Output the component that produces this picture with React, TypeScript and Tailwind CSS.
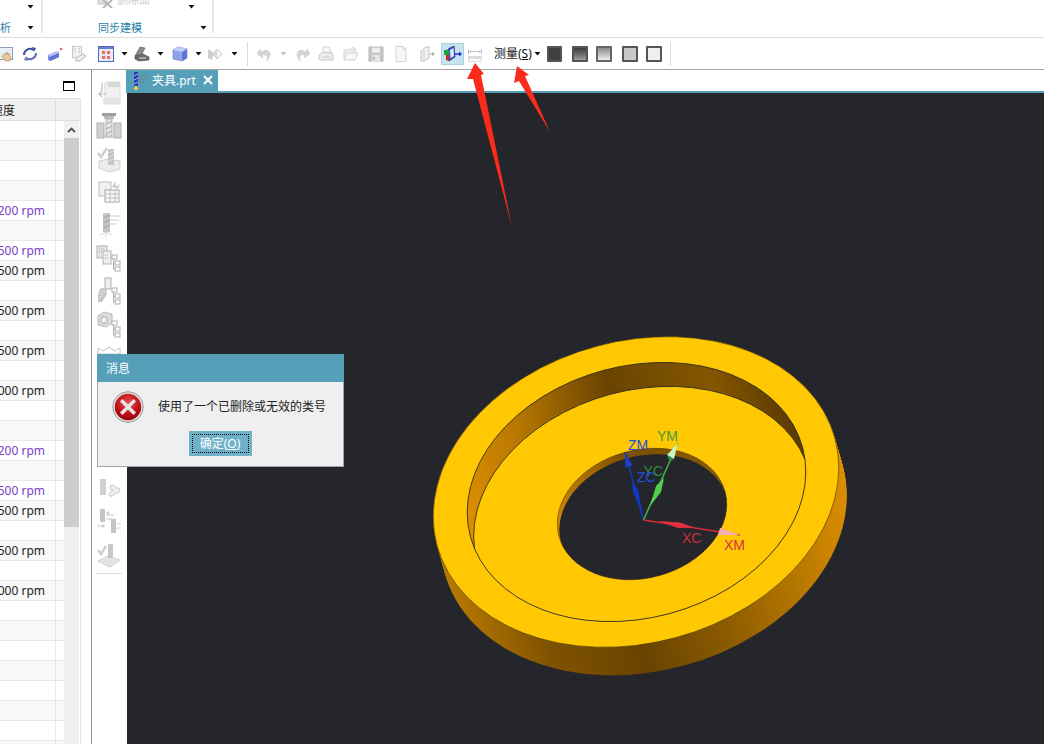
import React from "react";

const cjk = "[font-family:'Noto_Sans','Noto_Sans_CJK_SC',sans-serif]";

function Caret({ className = "", gray = false }: { className?: string; gray?: boolean }) {
  return (
    <svg width="7" height="4" viewBox="0 0 7 4" className={`block shrink-0 ${className}`}>
      <polygon points="0.5,0 6.5,0 3.5,3.5" fill={gray ? "#c4c4c4" : "#111"} />
    </svg>
  );
}

type IP = { className?: string };
const base = "block shrink-0 ";
const S = ({ className = "", children, w = 16, h = 16 }: IP & { children: React.ReactNode; w?: number; h?: number }) => (
  <svg width={w} height={h} viewBox={`0 0 ${w} ${h}`} className={base + className}>
    {children}
  </svg>
);

const Hand = (p: IP) => (
  <S {...p}>
    <rect x="0.5" y="1.5" width="15" height="12" fill="#e8eef8" stroke="#8f9fbe" />
    <path d="M5 10l3-3 1 2 1-3 1 3 1-2 1 3 1 1-1 4H8z" fill="#e8c89a" stroke="#b09060" strokeWidth=".6" />
  </S>
);
const Rotate = (p: IP) => (
  <S {...p}>
    <path d="M2 9a6 6 0 0 1 9.5-5" fill="none" stroke="#3c4f98" strokeWidth="2" />
    <path d="M14 7a6 6 0 0 1-9.5 5" fill="none" stroke="#5a6ab0" strokeWidth="2" />
    <polygon points="10,1 14,2 12,6" fill="#3c4f98" />
    <polygon points="6,15 2,14 4,10" fill="#6d7db8" />
  </S>
);
const CubeDot = (p: IP) => (
  <S {...p}>
    <polygon points="1,9 10,5 12,7 12,11 3,15 1,14" fill="#7f8fe0" />
    <polygon points="1,9 10,5 12,7 3,11" fill="#b4c0f4" />
    <polygon points="3,11 12,7 12,11 3,15" fill="#5f70d0" />
    <circle cx="14" cy="3" r="1.2" fill="#e85a5a" />
  </S>
);
const DocGray = (p: IP) => (
  <S {...p}>
    <rect x="1.5" y="0.5" width="9" height="11" fill="#f4f4f4" stroke="#c4c4c4" />
    <path d="M3 3h2M3 6h2M7 3h2M7 6h2" stroke="#bbb" />
    <polygon points="5,12 12,8 15,10 9,15 5,15" fill="#eee" stroke="#b8b8b8" />
  </S>
);
const Grid = (p: IP) => (
  <S {...p}>
    <rect x="0.5" y="0.5" width="15" height="15" fill="#e6e9f8" stroke="#5568b8" />
    <rect x="1" y="1" width="14" height="2" fill="#6a7cd0" />
    {[4, 9].map((x) =>
      [5, 10].map((y) => <rect key={`${x}${y}`} x={x} y={y} width="3" height="3" fill="#ee6a50" />)
    )}
  </S>
);
const Scanner = (p: IP) => (
  <S {...p}>
    <polygon points="1,10 6,1 11,2 7,10" fill="#8a8a8a" stroke="#555" strokeWidth=".6" />
    <polygon points="1,10 9,8 15,11 15,14 5,15 1,13" fill="#6c6c6c" stroke="#444" strokeWidth=".6" />
    <path d="M5 12h7" stroke="#ddd" />
  </S>
);
const CubeBlue = (p: IP) => (
  <S {...p}>
    <polygon points="1,4 6,1 15,3 15,12 10,15 1,13" fill="#8ea3e8" stroke="#6276c8" strokeWidth=".6" />
    <polygon points="1,4 6,1 15,3 10,6" fill="#c2cdf4" />
    <polygon points="10,6 15,3 15,12 10,15" fill="#5f78d2" />
  </S>
);
const Diamonds = (p: IP) => (
  <S {...p}>
    <polygon points="1,3 7,7 5,14 1,12" fill="#cfcfcf" />
    <polygon points="6,8 10,3 15,8 10,13" fill="#f4f4f4" stroke="#c8c8c8" />
    <polygon points="6,8 10,3 10,13" fill="#d8d8d8" />
  </S>
);
const Undo = (p: IP) => (
  <S {...p}>
    <path d="M4 6c4-3 10-2 9 4l-3 5c1-5 0-7-5-6l1 3-6-4 3-5z" fill="#d4d4d4" stroke="#c4c4c4" strokeWidth=".5" />
  </S>
);
const Redo = (p: IP) => (
  <S {...p}>
    <path d="M12 6C8 3 2 4 3 10l3 5c-1-5 0-7 5-6l-1 3 6-4-3-5z" fill="#d4d4d4" stroke="#c4c4c4" strokeWidth=".5" />
  </S>
);
const Printer = (p: IP) => (
  <S {...p}>
    <polygon points="5,1 11,1 13,7 5,7" fill="#f8f8f8" stroke="#cfcfcf" />
    <polygon points="1,9 5,6 14,7 15,9 15,14 2,14 1,13" fill="#ececec" stroke="#c8c8c8" />
    <path d="M4 11h8" stroke="#d0d0d0" />
  </S>
);
const OpenF = (p: IP) => (
  <S {...p}>
    <path d="M1 4h4l1-1h6v10H1z" fill="#ededed" stroke="#d4d4d4" />
    <polygon points="1,14 4,7 15,7 12,14" fill="#f6f6f6" stroke="#d4d4d4" />
    <path d="M9 1l3 1 1 3" stroke="#d8d8d8" fill="none" />
  </S>
);
const Save = (p: IP) => (
  <S {...p}>
    <rect x="1" y="1" width="14" height="14" fill="#c4c4c4" stroke="#b8b8b8" />
    <rect x="4" y="1.5" width="8" height="5" fill="#efefef" />
    <rect x="4" y="9" width="8" height="6" fill="#e6e6e6" />
    <rect x="5" y="10.5" width="2" height="3.5" fill="#b8b8b8" />
  </S>
);
const NewDoc = (p: IP) => (
  <S {...p}>
    <path d="M3 .5h7l3 3v12H3z" fill="#f8f8f8" stroke="#d4d4d4" />
    <path d="M10 .5v3h3" fill="none" stroke="#d4d4d4" />
  </S>
);
const Door = (p: IP) => (
  <S {...p}>
    <polygon points="2,5 7,1 10,1 10,12 5,15 2,15" fill="#f0f0f0" stroke="#c0c0c0" />
    <path d="M5 5v10" stroke="#cdcdcd" />
    <path d="M11 8h4" stroke="#a8a8a8" />
    <polygon points="13,6 16,8 13,10" fill="#a8a8a8" />
  </S>
);
const ActiveView = (p: IP) => (
  <S {...p} w={18} h={16}>
    <polygon points="4,3 10,0 11,11 5,15" fill="#3c58c8" stroke="#1a2a78" strokeWidth=".7" />
    <polygon points="6,4 9.5,2 10,10 6.5,12" fill="#dfe6ff" />
    <polygon points="0,4 5,4 5,9 0,9" fill="#16a83c" />
    <polygon points="2,9 5,9 5,15 2,14" fill="#d81e2a" />
    <path d="M11 8h5" stroke="#1a2fd0" strokeWidth="1.5" />
    <polygon points="15,5.5 18,8 15,10.5" fill="#1a2fd0" />
  </S>
);
const Ruler = (p: IP) => (
  <S {...p} w={14} h={13}>
    <path d="M.5 0v5M13.5 0v5M1 2.5h12" stroke="#c0c0c0" fill="none" />
    <path d="M3 1.5l-1.5 1 1.5 1M11 1.5l1.5 1-1.5 1" stroke="#c0c0c0" fill="none" />
    <rect x="0.5" y="7.5" width="13" height="5" fill="#fafafa" stroke="#dcdcdc" />
    <path d="M2 8v2M4 8v2M6 8v2M8 8v2M10 8v2M12 8v2" stroke="#c0c0c0" />
  </S>
);

/* left vertical strip icons */
const g1 = "#d8d8d8";
const g2 = "#bdbdbd";
const g3 = "#f0f0f0";
const V = ({ children }: { children: React.ReactNode }) => (
  <div className="h-[33px] flex items-center justify-center shrink-0">
    <svg width="26" height="28" viewBox="0 0 26 28" className="block">
      {children}
    </svg>
  </div>
);
const tree = (x: number, y: number) => (
  <g fill="#fff" stroke="#b0b0b0">
    <rect x={x} y={y} width="5" height="4" />
    <rect x={x + 3} y={y + 6} width="5" height="4" />
    <rect x={x + 3} y={y + 12} width="5" height="4" />
    <path d={`M${x + 1.5} ${y + 4}v10h2M${x + 1.5} ${y + 8}h2`} fill="none" />
  </g>
);
const strip = [
  <>
    <rect x="9" y="3" width="15" height="22" rx="1" fill={g3} stroke={g1} />
    <rect x="12" y="3" width="12" height="5" fill={g1} />
    <rect x="7" y="19" width="17" height="6" fill="#e4e4e4" />
    <path d="M6 4v9M10 15H3l3-3M3 15l3 3" fill="none" stroke={g2} strokeWidth="1.2" />
  </>,
  <>
    <rect x="6" y="1" width="14" height="3" fill="#9f9f9f" />
    <rect x="8" y="4" width="10" height="3" fill="#bcbcbc" />
    <rect x="1" y="11" width="7" height="15" fill="#d0d0d0" stroke="#b0b0b0" />
    <rect x="18" y="11" width="7" height="15" fill="#d0d0d0" stroke="#b0b0b0" />
    <rect x="8" y="23" width="10" height="3" fill="#d0d0d0" />
    <rect x="10" y="7" width="6" height="17" fill="#e4e4e4" stroke="#b8b8b8" />
    <path d="M10 12l6-3M10 17l6-3M10 22l6-3" stroke="#a8a8a8" />
  </>,
  <>
    <path d="M2 8l3 4 6-9" fill="none" stroke="#cfcfcf" strokeWidth="2.5" />
    <polygon points="3,16 12,14 24,16 24,24 13,27 3,23" fill="#ececec" stroke="#d0d0d0" />
    <rect x="12" y="4" width="6" height="16" fill="#c4c4c4" />
    <path d="M12 8l6-2M12 12l6-2M12 16l6-2" stroke="#dedede" />
  </>,
  <>
    <rect x="3" y="4" width="12" height="14" fill={g3} stroke="#c0c0c0" />
    <rect x="9" y="12" width="14" height="12" fill="#f8f8f8" stroke="#a8a8a8" />
    <path d="M9 16h14M9 20h14M14 12v12M19 12v12" stroke="#bdbdbd" />
    <path d="M16 9l3-6 1 5 4-2-2 5z" fill="#cfcfcf" />
  </>,
  <>
    <rect x="7" y="2" width="7" height="19" fill="#c4c4c4" />
    <path d="M7 7l7-3M7 12l7-3M7 17l7-3" stroke="#a4a4a4" />
    <path d="M14 5h11M14 9h9M14 13h7" stroke="#cdcdcd" strokeWidth="1.2" />
    <path d="M4 24l6-3 6 3M10 21v5" stroke="#d4d4d4" fill="none" />
  </>,
  <>
    <rect x="1" y="2" width="10" height="12" fill="#e4e4e4" stroke="#b4b4b4" />
    <rect x="7" y="7" width="8" height="13" fill="#eee" stroke="#b4b4b4" />
    <path d="M3 5h5M3 8h3M9 11h4M9 14h4" stroke="#a8a8a8" strokeDasharray="1 1" />
    {tree(16, 11)}
  </>,
  <>
    <rect x="9" y="1" width="6" height="11" fill="#eee" stroke="#b0b0b0" />
    <polygon points="4,12 10,10 11,17 6,25 2,25 2,18" fill="#c4c4c4" />
    <path d="M3 22l7-8M3 18l6-6" stroke="#e8e8e8" />
    {tree(16, 11)}
  </>,
  <>
    <polygon points="2,6 8,2 16,4 16,13 10,17 2,15" fill="#ddd" stroke="#bbb" />
    <circle cx="8" cy="10" r="3.5" fill="#eee" stroke="#aaa" />
    {tree(16, 11)}
  </>,
  <>
    <path d="M2 5l5 3 6-4 6 4 5-3v6H2z" fill="#fff" stroke="#c0c0c0" />
    <path d="M2 14h22M5 14v6M10 14v6M15 14v6M20 14v6" stroke="#c8c8c8" />
  </>,
  null,
  null,
  null,
  <>
    <rect x="4" y="4" width="6" height="16" fill="#d0d0d0" />
    <path d="M14 11c3-2 6 0 6 2l3 0c2 3-1 6-3 5l-4 3c-2 1-4-2-2-3l3-3c-3 0-4-2-3-4z" fill="#eee" stroke="#c8c8c8" />
  </>,
  <>
    <rect x="4" y="1" width="5" height="13" fill="#c4c4c4" />
    <rect x="15" y="11" width="5" height="14" fill="#c4c4c4" />
    <path d="M10 7h8M10 11h7M1 18h8M21 16h4M21 20h4" stroke="#c8c8c8" />
    <polygon points="10,5 13,3 13,7" fill="#c8c8c8" />
    <polygon points="9,18 6,16 6,20" fill="#c8c8c8" />
  </>,
  <>
    <path d="M2 9l3 4 5-8" fill="none" stroke="#cfcfcf" strokeWidth="2.5" />
    <polygon points="2,20 12,15 24,19 14,26" fill="#e4e4e4" stroke="#cdcdcd" />
    <rect x="12" y="3" width="5" height="14" fill="#c8c8c8" />
  </>,
];

const speeds: Record<number, [string, boolean]> = {
  4: ["200 rpm", true],
  6: ["500 rpm", true],
  7: ["500 rpm", false],
  9: ["500 rpm", false],
  11: ["500 rpm", false],
  13: ["000 rpm", false],
  16: ["200 rpm", true],
  18: ["500 rpm", true],
  19: ["500 rpm", false],
  21: ["500 rpm", false],
  23: ["000 rpm", false],
};

function Washer() {
  const rot = (cx: number, cy: number) => `rotate(-15 ${cx} ${cy})`;
  return (
    <svg width="917" height="651" viewBox="127 93 917 651" className="block">
      <defs>
        <linearGradient id="side" gradientUnits="userSpaceOnUse" x1="436" y1="0" x2="848" y2="0">
          <stop offset="0" stopColor="#b87a00" />
          <stop offset="0.2" stopColor="#7f5200" />
          <stop offset="0.42" stopColor="#694300" />
          <stop offset="0.62" stopColor="#8a5a00" />
          <stop offset="0.82" stopColor="#b57600" />
          <stop offset="1" stopColor="#dd8e00" />
        </linearGradient>
        <linearGradient id="wall" gradientUnits="userSpaceOnUse" x1="467" y1="0" x2="806" y2="0">
          <stop offset="0" stopColor="#dd8e00" />
          <stop offset="0.22" stopColor="#b57600" />
          <stop offset="0.5" stopColor="#6a4400" />
          <stop offset="0.8" stopColor="#845600" />
          <stop offset="1" stopColor="#5c3b00" />
        </linearGradient>
        <linearGradient id="hw" gradientUnits="userSpaceOnUse" x1="556" y1="0" x2="728" y2="0">
          <stop offset="0" stopColor="#d08800" />
          <stop offset="0.5" stopColor="#7a4f00" />
          <stop offset="1" stopColor="#8a5a00" />
        </linearGradient>
        <clipPath id="recess">
          <ellipse cx="636.5" cy="492" rx="172" ry="126" transform={rot(636.5, 492)} />
        </clipPath>
        <clipPath id="hole">
          <ellipse cx="642" cy="514" rx="86" ry="64" transform={rot(642, 514)} />
        </clipPath>
      </defs>
      {Array.from({ length: 29 }, (_, i) => (
        <ellipse
          key={i}
          cx={636 + (i * 8) / 28}
          cy={492 + i}
          rx="206"
          ry="151"
          transform={rot(636 + (i * 8) / 28, 492 + i)}
          fill="url(#side)"
        />
      ))}
      <ellipse cx="636" cy="492" rx="206" ry="151" transform={rot(636, 492)} fill="#ffc803" stroke="#4a3a10" strokeWidth=".6" />
      <ellipse cx="636.5" cy="492" rx="172" ry="126" transform={rot(636.5, 492)} fill="url(#wall)" />
      <g clipPath="url(#recess)">
        <ellipse cx="643" cy="516" rx="172" ry="126" transform={rot(643, 516)} fill="#ffc803" stroke="#2a2a20" strokeWidth=".8" />
      </g>
      <ellipse cx="636.5" cy="492" rx="172" ry="126" transform={rot(636.5, 492)} fill="none" stroke="#2a2a20" strokeWidth=".8" />
      <ellipse cx="642" cy="514" rx="86" ry="64" transform={rot(642, 514)} fill="url(#hw)" />
      <g clipPath="url(#hole)">
        <ellipse cx="644" cy="520" rx="86" ry="64" transform={rot(644, 520)} fill="#25262b" />
      </g>
      <ellipse cx="642" cy="514" rx="86" ry="64" transform={rot(642, 514)} fill="none" stroke="#3a3020" strokeWidth=".5" />

      {/* Z */}
      <line x1="643.5" y1="520" x2="625" y2="452" stroke="#1238b8" strokeWidth="1.6" />
      <polygon points="632.5,480 638.2,490.4 642.5,514 632.8,491.6" fill="#1238c8" />
      <polygon points="625,452 632.4,465.6 625.2,467.4" fill="#1a3fc8" />
      {/* Y */}
      <line x1="643.5" y1="520" x2="678" y2="443" stroke="#3cb43c" strokeWidth="1.6" />
      <polygon points="650,506 656,486 664,478 661,492" fill="#4fd04f" />
      <polygon points="678,443 674,459 667,455" fill="#c4f4c4" />
      <polygon points="674,459 667,455 669,460 671,461" fill="#2f8f3f" />
      {/* X */}
      <line x1="643.5" y1="520" x2="740" y2="535" stroke="#d82838" strokeWidth="1.6" />
      <polygon points="658,521 680,522.5 694,527.5 678,528" fill="#e43044" />
      <polygon points="740,535 720,528 718,535" fill="#f4b0b8" />

      <g fontFamily="'Liberation Sans', sans-serif" fontSize="14">
        <text x="628" y="450" fill="#1a4fe0">ZM</text>
        <text x="657" y="441" fill="#3f9a3f">YM</text>
        <text x="643.5" y="476" fill="#2f8f3f">YC</text>
        <text x="637" y="482" fill="#1a4fe0">ZC</text>
        <text x="682" y="543" fill="#c83040">XC</text>
        <text x="724" y="550" fill="#d83040">XM</text>
      </g>
    </svg>
  );
}

export default function App() {
  return (
    <div className={`relative w-[1044px] h-[744px] overflow-hidden bg-white flex flex-col ${cjk}`}>
      {/* ribbon */}
      <div className="h-[38px] shrink-0 border-b border-[#dcdcdc] flex items-start">
        <div className="w-[43px] h-[33px] border-r-2 border-[#e8e8e8] flex flex-col">
          <div className="h-[14px] shrink-0 flex items-center justify-end pr-[7px]">
            <Caret />
          </div>
          <div className="mt-[7px] h-[14px] shrink-0 flex items-center justify-between pr-[7px]">
            <span className="text-[11px] leading-[14px] text-[#1f7fa8]">析</span>
            <Caret />
          </div>
        </div>
        <div className="w-[171px] h-[33px] border-r-2 border-[#e8e8e8] flex flex-col">
          <div className="h-[14px] shrink-0 overflow-hidden flex items-center pr-[17px]">
            <S className="ml-[54px] -mt-[14px]">
              <rect x="1" y="0" width="9" height="12" fill="#e0e0e0" stroke="#c8c8c8" />
              <path d="M6 8l9 8M15 8l-9 8" stroke="#b8b8b8" strokeWidth="2" />
            </S>
            <span className="ml-[4px] -mt-[14px] text-[11px] leading-[14px] text-[#cfcfcf] whitespace-nowrap">删除面</span>
            <Caret className="ml-auto" />
          </div>
          <div className="mt-[7px] h-[14px] shrink-0 flex items-center pr-[5px]">
            <span className="ml-[55px] text-[11px] leading-[14px] text-[#1f7fa8] whitespace-nowrap">同步建模</span>
            <Caret className="ml-auto" />
          </div>
        </div>
      </div>

      {/* toolbar */}
      <div className="h-[32px] shrink-0 border-b border-[#a4a4a4] flex items-center">
        <Hand className="-ml-[3px]" />
        <Rotate className="ml-[9px]" />
        <CubeDot className="ml-[9px]" />
        <DocGray className="ml-[8px]" />
        <Grid className="ml-[11px]" />
        <Caret className="ml-[7px]" />
        <Scanner className="ml-[6px]" />
        <Caret className="ml-[7px]" />
        <CubeBlue className="ml-[8px]" />
        <Caret className="ml-[7px]" />
        <Diamonds className="ml-[5px]" />
        <Caret className="ml-[8px]" />
        <div className="ml-[9px] w-px h-[24px] bg-[#dcdcdc] shrink-0" />
        <Undo className="ml-[9px]" />
        <Caret gray className="ml-[7px]" />
        <Redo className="ml-[7px]" />
        <Printer className="ml-[8px]" />
        <OpenF className="ml-[9px]" />
        <Save className="ml-[9px]" />
        <NewDoc className="ml-[9px]" />
        <Door className="ml-[10px]" />
        <div className="ml-[6px] w-[23px] h-[22px] shrink-0 bg-[#c5e3ec] border border-[#a9d2e0] flex items-center justify-center">
          <ActiveView />
        </div>
        <Ruler className="ml-[4px] mr-[1px] mt-[3px]" />
        <span className="ml-[11px] w-[36px] shrink-0 text-[12px] leading-[16px] text-[#111] whitespace-nowrap">
          测量(<span className="underline">S</span>)
        </span>
        <Caret className="ml-[4px]" />
        <div className="ml-[6px] w-[15px] h-[16px] shrink-0 rounded-[1px] border-2 border-[#555] bg-[#404040]" />
        <div className="ml-[10px] w-[16px] h-[16px] shrink-0 rounded-[1px] border-2 border-[#555] bg-linear-to-b from-[#3c3c3c] to-[#9c9c9c]" />
        <div className="ml-[8px] w-[16px] h-[16px] shrink-0 rounded-[1px] border-2 border-[#666] bg-linear-to-b from-[#8c8c8c] to-[#eeeeee]" />
        <div className="ml-[10px] w-[16px] h-[16px] shrink-0 rounded-[1px] border-2 border-[#555] bg-[#c8c8c8]" />
        <div className="ml-[8px] w-[16px] h-[16px] shrink-0 rounded-[1px] border-2 border-[#555] bg-[#efefef]" />
        <div className="ml-[8px] w-px h-[24px] bg-[#dcdcdc] shrink-0" />
      </div>

      {/* main */}
      <div className="flex-1 min-h-0 flex">
        {/* navigator */}
        <div className="w-[92px] shrink-0 border-r border-[#8f9498] flex flex-col">
          <div className="h-[28px] shrink-0 flex items-start">
            <div className="ml-[63px] mt-[11px] w-[12px] h-[10px] border border-t-2 border-black" />
          </div>
          <div className="w-[81px] flex-1 min-h-0 border-r border-[#e4e4e4] flex flex-col">
            <div className="h-[23px] shrink-0 flex bg-[#f0f0f0] border-t border-b border-[#dcdcdc]">
              <div className="w-[56px] border-r border-[#dedede] flex items-center justify-end pr-[40px] pt-[3px] overflow-hidden whitespace-nowrap text-[12px] text-[#222]">
                速度
              </div>
            </div>
            <div className="flex-1 min-h-0 flex">
              <div className="w-[64px] shrink-0 overflow-hidden">
                {Array.from({ length: 32 }, (_, i) => (
                  <div
                    key={i}
                    className={`h-[20px] flex border-b border-[#e8e8e8] ${i % 2 === 1 ? "bg-[#f8f8f8]" : "bg-white"}`}
                  >
                    <div
                      className={`w-[56px] shrink-0 border-r border-[#e8e8e8] flex items-center justify-end pr-[10px] pt-px overflow-hidden whitespace-nowrap text-[12px] leading-[18px] ${
                        speeds[i]?.[1] ? "text-[#7a3fc8]" : "text-[#222]"
                      }`}
                    >
                      {speeds[i]?.[0]}
                    </div>
                  </div>
                ))}
              </div>
              <div className="w-[15px] shrink-0 bg-[#f0f0f0] flex flex-col">
                <div className="h-[17px] shrink-0 flex items-center justify-center">
                  <svg width="9" height="6" viewBox="0 0 9 6" className="block">
                    <path d="M1 5l3.5-3.5L8 5" fill="none" stroke="#505050" strokeWidth="1.8" />
                  </svg>
                </div>
                <div className="h-[389px] shrink-0 bg-[#cdcdcd]" />
              </div>
            </div>
          </div>
        </div>

        {/* tool strip */}
        <div className="w-[34px] shrink-0 flex flex-col pt-[6px] overflow-hidden">
          {strip.map((c, i) => (c ? <V key={i}>{c}</V> : <div key={i} className="h-[33px] shrink-0" />))}
          <div className="mt-[2px] mx-[4px] h-px bg-[#dcdcdc]" />
        </div>

        {/* graphics */}
        <div className="flex-1 min-w-0 flex flex-col">
          <div className="h-[23px] shrink-0 border-b-2 border-[#559fb9] flex items-stretch">
            <div className="w-[92px] bg-[#559fb9] flex items-center text-white">
              <svg width="20" height="20" viewBox="0 0 20 20" className="block ml-[5px] shrink-0">
                <rect x="3" y="1" width="4" height="14" fill="#2c3fa8" />
                <path d="M3 5l4-2M3 9l4-2M3 13l4-2" stroke="#9fb4ff" />
                <path d="M7 5h10M7 8h8M7 11h6" stroke="#6f7f88" strokeWidth="1.2" />
                <polygon points="4,15 6,15 7,19 3,19" fill="#f2d23a" />
              </svg>
              <span className="ml-px text-[12px] leading-[16px] whitespace-nowrap">夹具.prt</span>
              <svg width="10" height="10" viewBox="0 0 10 10" className="block ml-[7px] -mt-px shrink-0">
                <path d="M1 1l8 8M9 1l-8 8" stroke="#fff" strokeWidth="2" />
              </svg>
            </div>
          </div>
          <div className="flex-1 min-h-0 ml-px bg-[#25262b] overflow-hidden">
            <Washer />
          </div>
        </div>
      </div>

      {/* message dialog */}
      <div className="absolute left-[97px] top-[354px] w-[247px] h-[113px] bg-[#efefef] border-x border-b border-[#a4a4a4] flex flex-col">
        <div className="h-[28px] -mx-px shrink-0 bg-[#559fb9] flex items-center pl-[9px] pt-px text-[12px] text-white">消息</div>
        <div className="flex items-center mt-[10px] h-[30px]">
          <svg width="32" height="32" viewBox="0 0 32 32" className="block ml-[14px] shrink-0">
            <defs>
              <radialGradient id="err" cx="50%" cy="35%" r="70%">
                <stop offset="0" stopColor="#e85050" />
                <stop offset="0.6" stopColor="#c01018" />
                <stop offset="1" stopColor="#8a0008" />
              </radialGradient>
            </defs>
            <circle cx="16" cy="16" r="15.3" fill="#dcdcdc" stroke="#8a8a8a" strokeWidth=".8" />
            <circle cx="16" cy="16" r="13.2" fill="url(#err)" />
            <path d="M10.5 10.5l11 11M21.5 10.5l-11 11" stroke="#e4e4e4" strokeWidth="3.6" strokeLinecap="square" />
          </svg>
          <span className="ml-[14px] text-[12px] leading-[16px] text-[#222] whitespace-nowrap">使用了一个已删除或无效的类号</span>
        </div>
        <div className="mt-[9px] flex justify-center">
          <div className="-ml-px w-[63px] h-[25px] bg-[#6fb1c9] p-[3px]">
            <div className="h-full border border-dotted border-black flex items-center justify-center text-[12px] text-white whitespace-nowrap">
              确定(<span className="underline">O</span>)
            </div>
          </div>
        </div>
      </div>

      {/* red annotation arrows */}
      <svg width="1044" height="744" viewBox="0 0 1044 744" className="absolute inset-0 pointer-events-none">
        <polygon points="475,63 484,74 481,75 512,227 473,79 467,79" fill="#fb2b1c" />
        <polygon points="517,66 529,75 525,76 550,132 519,81 514,83" fill="#fb2b1c" />
      </svg>
    </div>
  );
}
